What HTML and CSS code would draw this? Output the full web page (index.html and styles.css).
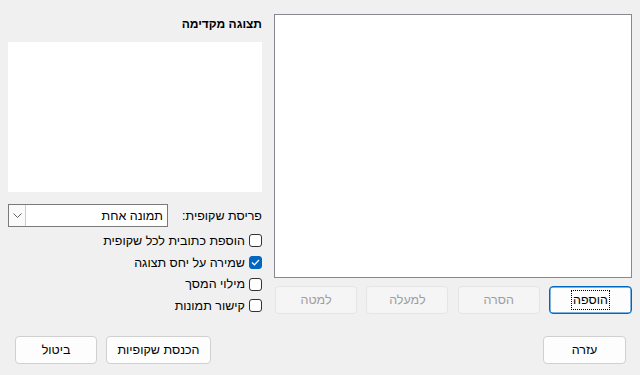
FILE: index.html
```html
<!DOCTYPE html>
<html lang="he" dir="rtl">
<head>
    <meta charset="UTF-8">
    <title>אלבום תמונות</title>
    <link rel="stylesheet" href="styles.css">
</head>
<body>
    <div class="dialog">
        <!-- Top area: slide list on the right, preview and options on the left -->
        <div class="main">
            <div class="slides-col">
                <div class="slide-list"></div>
                <div class="list-buttons">
                    <button class="btn btn-default"><span class="focus-ring">הוספה</span></button>
                    <button class="btn" disabled>הסרה</button>
                    <button class="btn" disabled>למעלה</button>
                    <button class="btn" disabled>למטה</button>
                </div>
            </div>

            <div class="preview-col">
                <h2 class="preview-title">תצוגה מקדימה</h2>
                <div class="preview"></div>

                <div class="layout-row">
                    <span class="layout-label">פריסת שקופית:</span>
                    <div class="combo">
                        <span class="combo-value">תמונה אחת</span>
                        <span class="combo-arrow">
                            <svg width="9" height="5" viewBox="0 0 9 5"><path d="M0.5 0.5 L4.5 4.5 L8.5 0.5" fill="none" stroke="#606060" stroke-width="1"/></svg>
                        </span>
                    </div>
                </div>

                <label class="check"><span class="box"></span>הוספת כתובית לכל שקופית</label>
                <label class="check"><span class="box checked">
                    <svg width="9" height="7" viewBox="0 0 9 7"><path d="M1 3.5 L3.4 5.8 L8 1" fill="none" stroke="#ffffff" stroke-width="1.2"/></svg>
                </span>שמירה על יחס תצוגה</label>
                <label class="check"><span class="box"></span>מילוי המסך</label>
                <label class="check"><span class="box"></span>קישור תמונות</label>
            </div>
        </div>

        <!-- Dialog buttons -->
        <div class="footer">
            <button class="btn btn-help">עזרה</button>
            <div class="footer-actions">
                <button class="btn btn-insert">הכנסת שקופיות</button>
                <button class="btn">ביטול</button>
            </div>
        </div>
    </div>
</body>
</html>
```

FILE: styles.css
```css
/* Page base */
body {
    margin: 0;
    background: #f0f0f0;
    font-family: "Liberation Sans", "DejaVu Sans", sans-serif;
    font-size: 12.5px;
    color: #000000;
}

.dialog {
    width: 640px;
    height: 375px;
    padding: 0 8px;
    box-sizing: border-box;
}

.main {
    display: flex;
    gap: 12px;
}

/* Slide list column */
.slides-col {
    width: 358px;
    padding-top: 14px;
}

.slide-list {
    height: 264px;
    background: #ffffff;
    border: 1px solid #868a8e;
    box-sizing: border-box;
}

.list-buttons {
    display: flex;
    justify-content: space-between;
    margin-top: 8px;
    padding-left: 1px;
}

/* Buttons */
.btn {
    height: 28px;
    width: 82px;
    padding: 0;
    font-family: inherit;
    font-size: 12.5px;
    color: #000000;
    background: #fdfdfd;
    border: 1px solid #d0d0d0;
    border-radius: 4px;
    display: flex;
    align-items: center;
    justify-content: center;
}

.btn:disabled {
    background: #f5f5f5;
    border-color: #e5e5e5;
    color: #9d9d9d;
}

.btn-default {
    width: 83px;
    border-color: #0067c0;
    box-shadow: inset 0 0 0 0.5px #0067c0;
}

.focus-ring {
    outline: 1px dotted #000000;
    padding: 2px 1px;
    line-height: 14px;
}

/* Preview column */
.preview-col {
    width: 254px;
    padding-top: 16px;
}

.preview-title {
    margin: 0 0 10px 0;
    font-size: 12px;
    font-weight: bold;
    line-height: 16px;
}

.preview {
    height: 150px;
    background: #ffffff;
}

.layout-row {
    display: flex;
    align-items: center;
    justify-content: space-between;
    margin-top: 12px;
    height: 23px;
}

.combo {
    width: 160px;
    height: 23px;
    box-sizing: border-box;
    background: #ffffff;
    border: 1px solid #7a7a7a;
    display: flex;
    align-items: center;
    justify-content: space-between;
}

.combo-value {
    padding-right: 4px;
}

.combo-arrow {
    width: 17px;
    height: 21px;
    box-sizing: border-box;
    background: #fafafa;
    border-right: 1px solid #cccccc;
    display: flex;
    align-items: center;
    justify-content: center;
}

/* Checkboxes */
.check {
    display: flex;
    align-items: center;
    gap: 4px;
    height: 21.7px;
}

.layout-row + .check {
    margin-top: 3px;
}

.box {
    width: 13px;
    height: 13px;
    box-sizing: border-box;
    border: 1px solid #333333;
    border-radius: 3px;
    background: #ffffff;
    display: flex;
    align-items: center;
    justify-content: center;
}

.box.checked {
    background: #0067c0;
    border-color: #0067c0;
}

/* Footer */
.footer {
    display: flex;
    justify-content: space-between;
    margin-top: 19px;
    padding: 0 6px 0 7px;
}

.btn-help {
    width: 83px;
}

.footer-actions {
    display: flex;
    gap: 9px;
}

.btn-insert {
    width: 105px;
}
```
